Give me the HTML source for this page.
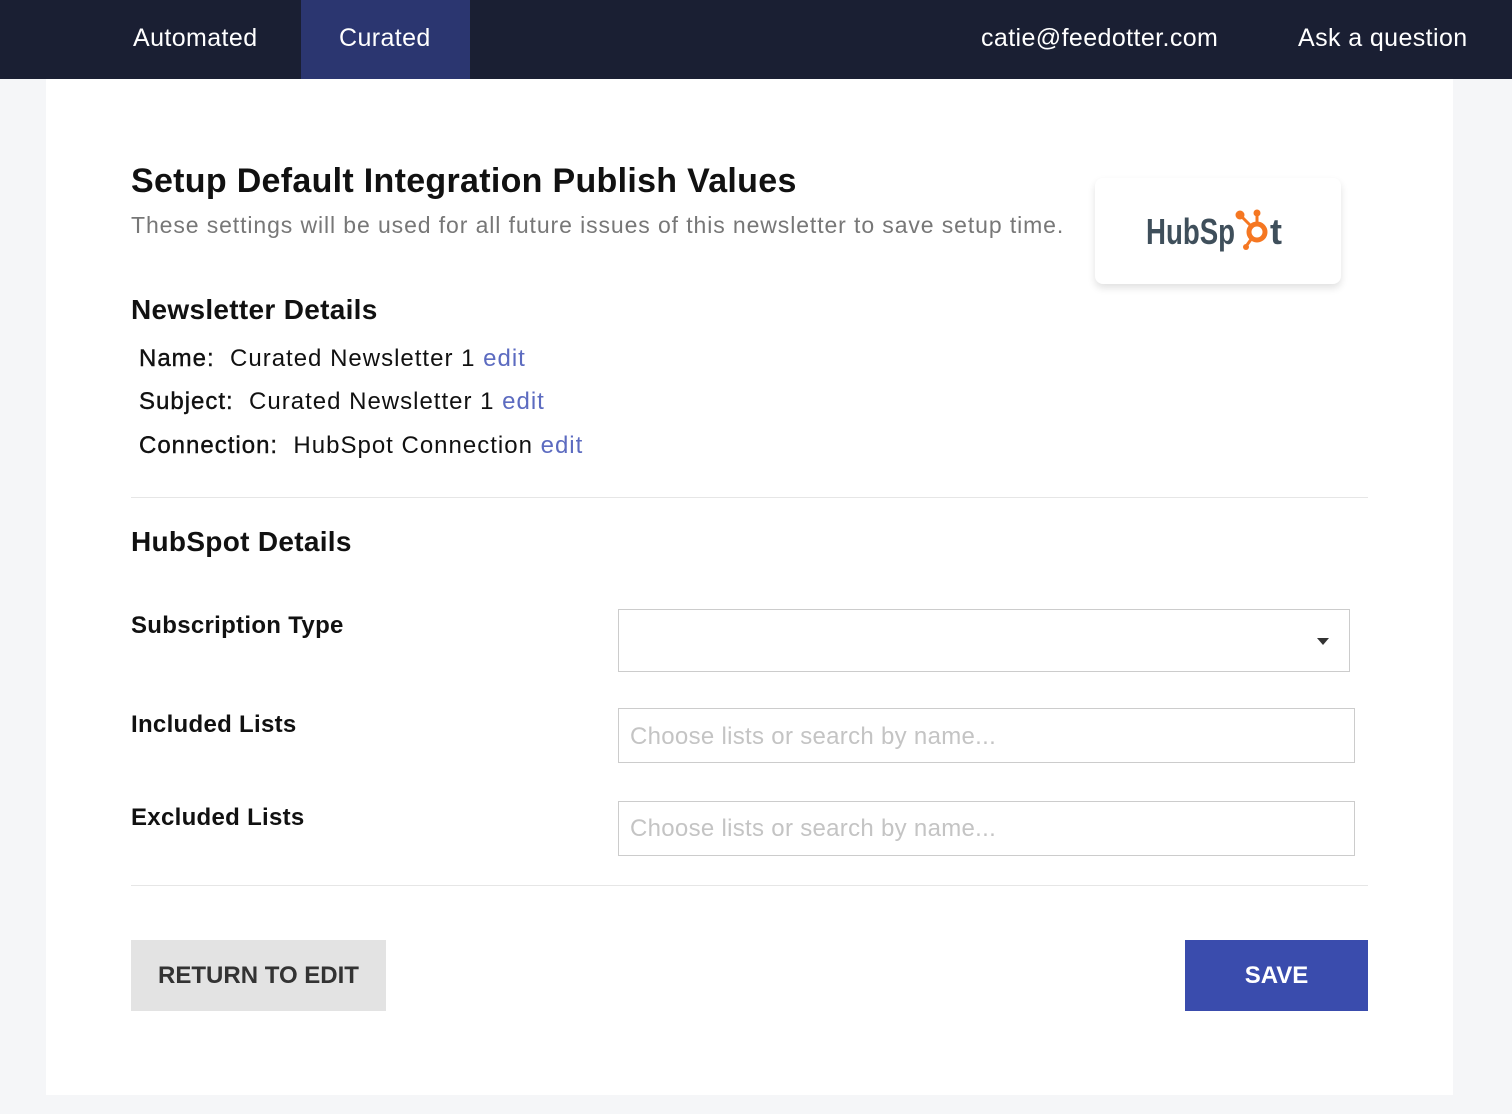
<!DOCTYPE html>
<html><head><meta charset="utf-8"><style>
*{margin:0;padding:0;box-sizing:border-box}
body{width:1512px;height:1114px;background:#f5f6f8;font-family:"Liberation Sans",sans-serif;position:relative;overflow:hidden;color:#111}
.nav{position:absolute;left:0;top:0;width:1512px;height:79px;background:#1a1f33;color:#fff;font-size:25px;letter-spacing:0.4px}
.nav span{position:absolute;top:24px}
.cur{position:absolute;left:301px;top:0;width:169px;height:79px;background:#2b3670}
.card{position:absolute;left:46px;top:79px;width:1407px;height:1016px;background:#fff}
.a{position:absolute;white-space:nowrap}
h1{font-size:34px;font-weight:bold;letter-spacing:0.3px}
.sub{font-size:23px;color:#777;letter-spacing:0.9px}
.h2{font-size:28px;font-weight:bold;letter-spacing:0.3px}
.row{font-size:24px;letter-spacing:1px}
.row b{font-weight:normal;color:#111;-webkit-text-stroke:0.4px #111}
.e{color:#5c6bc0}
.lbl{font-size:24px;font-weight:bold;letter-spacing:0.3px}
.hr{position:absolute;left:131px;width:1237px;height:1px;background:#e6e6e6}
.in{position:absolute;border:1px solid #ccc;background:#fff;font-size:24px;color:#c4c4c4;padding-left:11px;letter-spacing:0.3px}
.btn{position:absolute;font-size:24px;font-weight:bold;display:flex;align-items:center;justify-content:center}
</style></head><body>
<div class="nav"><div class="cur"></div>
<span style="left:133px">Automated</span><span style="left:339px">Curated</span>
<span style="left:981px">catie@feedotter.com</span><span style="left:1298px">Ask a question</span></div>
<div class="card"></div>
<h1 class="a" style="left:131px;top:162px">Setup Default Integration Publish Values</h1>
<div class="a sub" style="left:131px;top:212px">These settings will be used for all future issues of this newsletter to save setup time.</div>
<div class="a" style="left:1095px;top:178px;width:246px;height:106px;background:#fff;border-radius:8px;box-shadow:0 4px 8px rgba(0,0,0,0.12);">
<svg width="246" height="106" viewBox="0 0 246 106">
<text x="51" y="66" font-family="Liberation Sans,sans-serif" font-weight="bold" font-size="36" fill="#3f4f5b" textLength="89" lengthAdjust="spacingAndGlyphs">HubSp</text>
<text x="175" y="66" font-family="Liberation Sans,sans-serif" font-weight="bold" font-size="36" fill="#3f4f5b">t</text>
<circle cx="162" cy="54" r="8" fill="none" stroke="#f57722" stroke-width="5"/>
<line x1="162" y1="46" x2="162" y2="37" stroke="#f57722" stroke-width="3"/>
<circle cx="162" cy="35" r="3.5" fill="#f57722"/>
<line x1="156" y1="48" x2="147" y2="39" stroke="#f57722" stroke-width="3"/>
<circle cx="145" cy="37" r="4.5" fill="#f57722"/>
<line x1="157" y1="60" x2="152" y2="67" stroke="#f57722" stroke-width="3"/>
<circle cx="151" cy="69" r="3" fill="#f57722"/>
</svg></div>
<div class="a h2" style="left:131px;top:294px">Newsletter Details</div>
<div class="a row" style="left:139px;top:345px"><b>Name:</b>&nbsp; Curated Newsletter 1 <span class="e">edit</span></div>
<div class="a row" style="left:139px;top:388px"><b>Subject:</b>&nbsp; Curated Newsletter 1 <span class="e">edit</span></div>
<div class="a row" style="left:139px;top:432px"><b>Connection:</b>&nbsp; HubSpot Connection <span class="e">edit</span></div>
<div class="hr" style="top:497px"></div>
<div class="a h2" style="left:131px;top:526px">HubSpot Details</div>
<div class="a lbl" style="left:131px;top:612px">Subscription Type</div>
<div class="a lbl" style="left:131px;top:711px">Included Lists</div>
<div class="a lbl" style="left:131px;top:804px">Excluded Lists</div>
<div class="in" style="left:618px;top:609px;width:732px;height:63px"><div style="position:absolute;right:20px;top:28px;border-left:6px solid transparent;border-right:6px solid transparent;border-top:7px solid #333"></div></div>
<div class="in" style="left:618px;top:708px;width:737px;height:55px;line-height:55px">Choose lists or search by name...</div>
<div class="in" style="left:618px;top:801px;width:737px;height:55px;line-height:53px">Choose lists or search by name...</div>
<div class="hr" style="top:885px"></div>
<div class="btn" style="left:131px;top:940px;width:255px;height:71px;background:#e3e3e3;color:#333">RETURN TO EDIT</div>
<div class="btn" style="left:1185px;top:940px;width:183px;height:71px;background:#3a4cad;color:#fff">SAVE</div>
</body></html>
